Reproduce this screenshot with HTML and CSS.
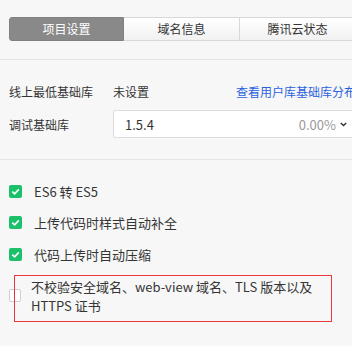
FILE: index.html
```html
<!DOCTYPE html>
<html lang="zh-CN">
<head>
    <meta charset="UTF-8">
    <title>项目设置</title>
    <link rel="stylesheet" href="styles.css">
</head>
<body>
    <!-- 标签栏 -->
    <div class="tabs">
        <div class="tab active">项目设置</div>
        <div class="tab">域名信息</div>
        <div class="tab">腾讯云状态</div>
    </div>

    <!-- 基础库设置 -->
    <div class="form-section">
        <div class="form-row">
            <span class="label">线上最低基础库</span>
            <span class="value">未设置</span>
            <a class="link" href="#">查看用户库基础库分布</a>
        </div>
        <div class="form-row">
            <span class="label">调试基础库</span>
            <div class="select">
                <span>1.5.4</span>
                <span class="percent">0.00%</span>
                <svg class="chevron" width="7" height="5" viewBox="0 0 7 5"><path d="M0.8 1 L3.5 3.6 L6.2 1" fill="none" stroke="#333" stroke-width="1.4"/></svg>
            </div>
        </div>
    </div>

    <!-- 编译选项 -->
    <div class="check-section">
        <div class="check-row">
            <span class="checkbox checked"><svg width="13" height="13" viewBox="0 0 13 13"><path d="M3.3 6.6 L5.6 8.9 L9.8 4.4" fill="none" stroke="#fff" stroke-width="1.6"/></svg></span>
            <span>ES6 转 ES5</span>
        </div>
        <div class="check-row">
            <span class="checkbox checked"><svg width="13" height="13" viewBox="0 0 13 13"><path d="M3.3 6.6 L5.6 8.9 L9.8 4.4" fill="none" stroke="#fff" stroke-width="1.6"/></svg></span>
            <span>上传代码时样式自动补全</span>
        </div>
        <div class="check-row">
            <span class="checkbox checked"><svg width="13" height="13" viewBox="0 0 13 13"><path d="M3.3 6.6 L5.6 8.9 L9.8 4.4" fill="none" stroke="#fff" stroke-width="1.6"/></svg></span>
            <span>代码上传时自动压缩</span>
        </div>
        <div class="check-row multi">
            <span class="checkbox"></span>
            <span class="multi-text">不校验安全域名、web-view 域名、TLS 版本以及 HTTPS 证书</span>
            <div class="highlight"></div>
        </div>
    </div>
</body>
</html>
```

FILE: styles.css
```css
* {
    margin: 0;
    padding: 0;
    box-sizing: border-box;
}

body {
    width: 352px;
    height: 346px;
    overflow: hidden;
    background: #f7f7f7;
    color: #353535;
    font-family: "Noto Sans CJK SC", "Liberation Sans", sans-serif;
    font-size: 12px;
}

/* ========= 标签栏 ========= */
.tabs {
    display: flex;
    padding: 17px 0 0 9px;
    height: 60px;
    border-bottom: 1px solid #e4e4e4;
}

.tab {
    flex: none;
    width: 116px;
    height: 24px;
    line-height: 22px;
    text-align: center;
    background: linear-gradient(#ffffff, #f1f1f1);
    border: 1px solid #d8d8d8;
    border-left: none;
    color: #333;
}

.tab.active {
    width: 115px;
    background: #898989;
    border: 1px solid #808080;
    border-radius: 3px 0 0 3px;
    color: #fff;
}

/* ========= 基础库 ========= */
.form-section {
    padding: 21px 0 21px 9px;
    border-bottom: 1px solid #e4e4e4;
    display: flex;
    flex-direction: column;
    gap: 9px;
}

.form-row {
    display: flex;
    align-items: center;
    min-height: 20px;
    white-space: nowrap;
}

.label {
    flex: none;
    width: 104px;
}

.value {
    flex: none;
    width: 123px;
}

.link {
    color: #2b62e0;
    text-decoration: none;
}

.select {
    flex: none;
    width: 243px;
    height: 28px;
    display: flex;
    align-items: center;
    padding: 0 8px 0 11px;
    background: #fff;
    border: 1px solid #dcdcdc;
    border-radius: 2px;
    font-size: 13px;
}

.percent {
    margin-left: auto;
    color: #9a9a9a;
}

.chevron {
    margin-left: 4px;
}

/* ========= 编译选项 ========= */
.check-section {
    padding: 21px 0 0 9px;
    display: flex;
    flex-direction: column;
    gap: 11.5px;
    font-size: 13px;
}

.check-row {
    display: flex;
    align-items: center;
    height: 20px;
}

.checkbox {
    flex: none;
    width: 13px;
    height: 13px;
    margin-right: 12px;
    border-radius: 2px;
}

.checkbox.checked {
    background: #1bc06b;
}

.checkbox svg {
    display: block;
}

.check-row.multi {
    position: relative;
    height: auto;
    margin-top: 1px;
}

.check-row.multi .checkbox {
    width: 12px;
    height: 13px;
    margin-right: 10px;
    background: #fff;
    border: 1px solid #cfcfcf;
}

.multi-text {
    width: 290px;
    line-height: 19px;
}

/* 红色标注框 */
.highlight {
    position: absolute;
    left: 5px;
    top: -2px;
    width: 318px;
    height: 47px;
    border: 1px solid #e8383d;
    pointer-events: none;
}
```
